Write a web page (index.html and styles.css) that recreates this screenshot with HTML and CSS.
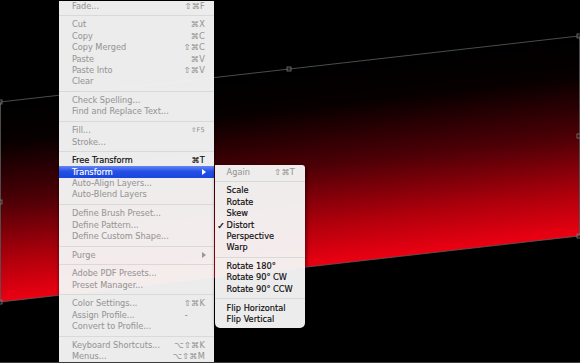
FILE: index.html
```html
<!DOCTYPE html>
<html lang="en">
<head>
    <meta charset="UTF-8">
    <meta name="viewport" content="width=device-width, initial-scale=1.0">
    <title>Edit - Transform</title>
    <link rel="stylesheet" href="styles.css">
</head>
<body>
    <div class="stage">
        <!-- the layer being transformed -->
        <svg class="artwork" width="580" height="363" viewBox="0 0 580 363">
            <defs>
                <linearGradient id="fade" x1="0" y1="102" x2="0" y2="302" gradientUnits="userSpaceOnUse">
                    <stop offset="0" stop-color="#000"/>
                    <stop offset="0.2" stop-color="#070000"/>
                    <stop offset="0.5" stop-color="#4c0006"/>
                    <stop offset="0.8" stop-color="#b2000c"/>
                    <stop offset="1" stop-color="#ec0012"/>
                </linearGradient>
            </defs>
            <g transform="matrix(1 -0.114 0 1 0 0)">
                <rect x="0.5" y="102" width="579" height="200" fill="url(#fade)"/>
                <rect x="0.5" y="102" width="579" height="200" fill="none" stroke="#5c5c5c" stroke-width="0.8"/>
            </g>
            <g class="handles">
                <rect x="287" y="67" width="4" height="4"/>
                <rect x="577" y="34" width="4" height="4"/>
                <rect x="577" y="134" width="4" height="4"/>
                <rect x="577" y="234" width="4" height="4"/>
                <rect x="-2" y="100" width="4" height="4"/>
                <rect x="-2" y="200" width="4" height="4"/>
                <rect x="-2" y="300" width="4" height="4"/>
            </g>
        </svg>

        <div class="menu">
            <div class="item off"><span>Fade...</span><span class="key">⇧⌘F</span></div>
            <div class="sep"></div>
            <div class="item off"><span>Cut</span><span class="key">⌘X</span></div>
            <div class="item off"><span>Copy</span><span class="key">⌘C</span></div>
            <div class="item off"><span>Copy Merged</span><span class="key">⇧⌘C</span></div>
            <div class="item off"><span>Paste</span><span class="key">⌘V</span></div>
            <div class="item off"><span>Paste Into</span><span class="key">⇧⌘V</span></div>
            <div class="item off"><span>Clear</span></div>
            <div class="sep"></div>
            <div class="item off"><span>Check Spelling...</span></div>
            <div class="item off"><span>Find and Replace Text...</span></div>
            <div class="sep"></div>
            <div class="item off"><span>Fill...</span><span class="key small">⇧F5</span></div>
            <div class="item off"><span>Stroke...</span></div>
            <div class="sep"></div>
            <div class="item"><span>Free Transform</span><span class="key">⌘T</span></div>
            <div class="item active"><span>Transform</span><span class="arrow"></span></div>
            <div class="item off"><span>Auto-Align Layers...</span></div>
            <div class="item off"><span>Auto-Blend Layers</span></div>
            <div class="sep"></div>
            <div class="item off"><span>Define Brush Preset...</span></div>
            <div class="item off"><span>Define Pattern...</span></div>
            <div class="item off"><span>Define Custom Shape...</span></div>
            <div class="sep"></div>
            <div class="item off"><span>Purge</span><span class="arrow"></span></div>
            <div class="sep"></div>
            <div class="item off"><span>Adobe PDF Presets...</span></div>
            <div class="item off"><span>Preset Manager...</span></div>
            <div class="sep"></div>
            <div class="item off"><span>Color Settings...</span><span class="key">⇧⌘K</span></div>
            <div class="item off"><span>Assign Profile...</span><span class="key dash">-</span></div>
            <div class="item off"><span>Convert to Profile...</span></div>
            <div class="sep"></div>
            <div class="item off"><span>Keyboard Shortcuts...</span><span class="key">⌥⇧⌘K</span></div>
            <div class="item off"><span>Menus...</span><span class="key">⌥⇧⌘M</span></div>
        </div>

        <div class="submenu">
            <div class="item off"><span>Again</span><span class="key">⇧⌘T</span></div>
            <div class="sep"></div>
            <div class="item"><span>Scale</span></div>
            <div class="item"><span>Rotate</span></div>
            <div class="item"><span>Skew</span></div>
            <div class="item checked"><span>Distort</span></div>
            <div class="item"><span>Perspective</span></div>
            <div class="item"><span>Warp</span></div>
            <div class="sep"></div>
            <div class="item"><span>Rotate 180°</span></div>
            <div class="item"><span>Rotate 90° CW</span></div>
            <div class="item"><span>Rotate 90° CCW</span></div>
            <div class="sep"></div>
            <div class="item"><span>Flip Horizontal</span></div>
            <div class="item"><span>Flip Vertical</span></div>
        </div>
    </div>
</body>
</html>
```

FILE: styles.css
```css
body {
    margin: 0;
    background: #000;
    font-family: 'DejaVu Sans', sans-serif;
}

.stage {
    position: relative;
    width: 580px;
    height: 363px;
    overflow: hidden;
    background: #000;
    border-bottom: 1px solid #3c3c3c;
    box-sizing: border-box;
}

.artwork {
    position: absolute;
    left: 0;
    top: 0;
}

.handles rect {
    fill: none;
    stroke: #7a7a7a;
    stroke-width: 0.8;
}

.menu,
.submenu {
    position: absolute;
    background: rgba(246, 246, 246, 0.96);
    font-size: 8.2px;
    color: #0a0a0a;
}

.menu {
    left: 59px;
    top: 0.6px;
    width: 155px;
    box-shadow: 0 0 3px rgba(0, 0, 0, 0.6);
}

.submenu {
    left: 214.6px;
    top: 164.6px;
    width: 90.4px;
    padding: 2px 0 2.4px;
    border-radius: 0 3px 5px 5px;
    box-shadow: 1px 2px 4px rgba(0, 0, 0, 0.6);
}

.item {
    display: flex;
    justify-content: space-between;
    align-items: center;
    height: 11.45px;
    line-height: 11.45px;
    padding: 0 9px 0 13px;
    white-space: nowrap;
    position: relative;
    -webkit-text-stroke: 0.15px currentColor;
}

.submenu .item {
    padding: 0 10px 0 12px;
}

.item.off {
    color: #979797;
    -webkit-text-stroke: 0.08px currentColor;
}

.menu .item.active {
    background: linear-gradient(#6685f2, #2550e6 45%, #1a45de);
    color: #fff;
    margin-top: -0.2px;
    height: 11.65px;
}

.item.checked::before {
    content: '✓';
    position: absolute;
    left: 2.5px;
    top: 0;
    font-size: 9.5px;
    font-weight: bold;
}

.key {
    font-size: 8.2px;
    letter-spacing: 0.2px;
}

.key.small {
    font-size: 6.6px;
}

.key.dash {
    margin-right: 17px;
}

.arrow {
    width: 0;
    height: 0;
    border-left: 4px solid currentColor;
    border-top: 3px solid transparent;
    border-bottom: 3px solid transparent;
    margin-right: -1px;
}

.sep {
    height: 7.2px;
    display: flex;
    align-items: center;
}

.sep::after {
    content: '';
    flex: 1;
    height: 1px;
    background: #d9d9d9;
}
```
